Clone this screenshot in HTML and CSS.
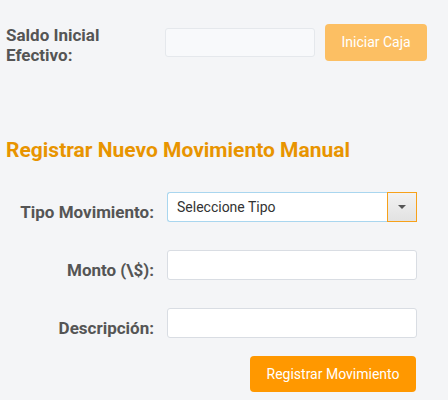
FILE: index.html
```html
<!DOCTYPE html>
<html lang="es">
<head>
    <meta charset="UTF-8">
    <meta name="viewport" content="width=device-width, initial-scale=1.0">
    <title>Caja</title>
    <link rel="stylesheet" href="styles.css">
</head>
<body>
    <div class="opening">
        <label for="saldoInicial">Saldo Inicial Efectivo:</label>
        <input type="text" id="saldoInicial" class="field field-muted">
        <button class="btn btn-disabled">Iniciar Caja</button>
    </div>

    <h2>Registrar Nuevo Movimiento Manual</h2>

    <div class="form-row">
        <label for="tipo">Tipo Movimiento:</label>
        <div class="select-wrap">
            <select id="tipo">
                <option>Seleccione Tipo</option>
            </select>
            <span class="select-arrow"></span>
        </div>
    </div>

    <div class="form-row">
        <label for="monto">Monto (\$):</label>
        <input type="text" id="monto" class="field">
    </div>

    <div class="form-row">
        <label for="descripcion">Descripción:</label>
        <input type="text" id="descripcion" class="field">
    </div>

    <div class="actions">
        <button class="btn">Registrar Movimiento</button>
    </div>
</body>
</html>
```

FILE: styles.css
```css
* {
    margin: 0;
    padding: 0;
    box-sizing: border-box;
}

body {
    font-family: Roboto, 'Noto Sans', sans-serif;
    background: #f4f5f7;
    color: #555;
    padding: 19px 6px 0;
}

label {
    font-size: 17px;
    font-weight: 700;
    line-height: 20px;
    color: #555;
}

.opening {
    display: flex;
    align-items: center;
}

.opening label {
    width: 159px;
    margin-top: 6px;
}

.field {
    height: 30px;
    border: 1px solid #d9dde3;
    border-radius: 3px;
    background: #fff;
    font-family: inherit;
    font-size: 14px;
    padding: 0 8px;
}

.field-muted {
    width: 150px;
    height: 29px;
    background: #f8f9fb;
    border-color: #e5e8ec;
    margin-right: 10px;
}

.btn {
    background: #ff9800;
    color: #fff;
    border: none;
    border-radius: 4px;
    font-family: inherit;
    font-size: 14px;
    height: 36px;
    padding: 0 16.5px;
    cursor: pointer;
}

.btn-disabled {
    background: #fcbf63;
    height: 37px;
}

h2 {
    margin-top: 73px;
    font-size: 21px;
    font-weight: 700;
    color: #e89400;
    margin-bottom: 30px;
}

.form-row {
    display: flex;
    align-items: center;
    margin-bottom: 28px;
}

.form-row label {
    width: 148px;
    text-align: right;
    margin-right: 13px;
    padding-top: 10px;
}

.form-row .field {
    width: 250px;
}

.select-wrap {
    display: flex;
    width: 250px;
    height: 30px;
}

.select-wrap select {
    flex: 1;
    appearance: none;
    -webkit-appearance: none;
    border: 1px solid #a9d6ef;
    border-right: none;
    border-radius: 3px 0 0 3px;
    background: #fff;
    font-family: inherit;
    font-size: 14px;
    color: #333;
    padding: 0 9px;
}

.select-arrow {
    width: 30px;
    border: 1px solid #f7a11a;
    background: linear-gradient(#f2f2f2, #e2e2e2);
    display: flex;
    align-items: center;
    justify-content: center;
}

.select-arrow::after {
    content: '';
    border-left: 4px solid transparent;
    border-right: 4px solid transparent;
    border-top: 4px solid #555;
}

.actions {
    display: flex;
    justify-content: flex-end;
    width: 410px;
    margin-top: -10px;
}
```
